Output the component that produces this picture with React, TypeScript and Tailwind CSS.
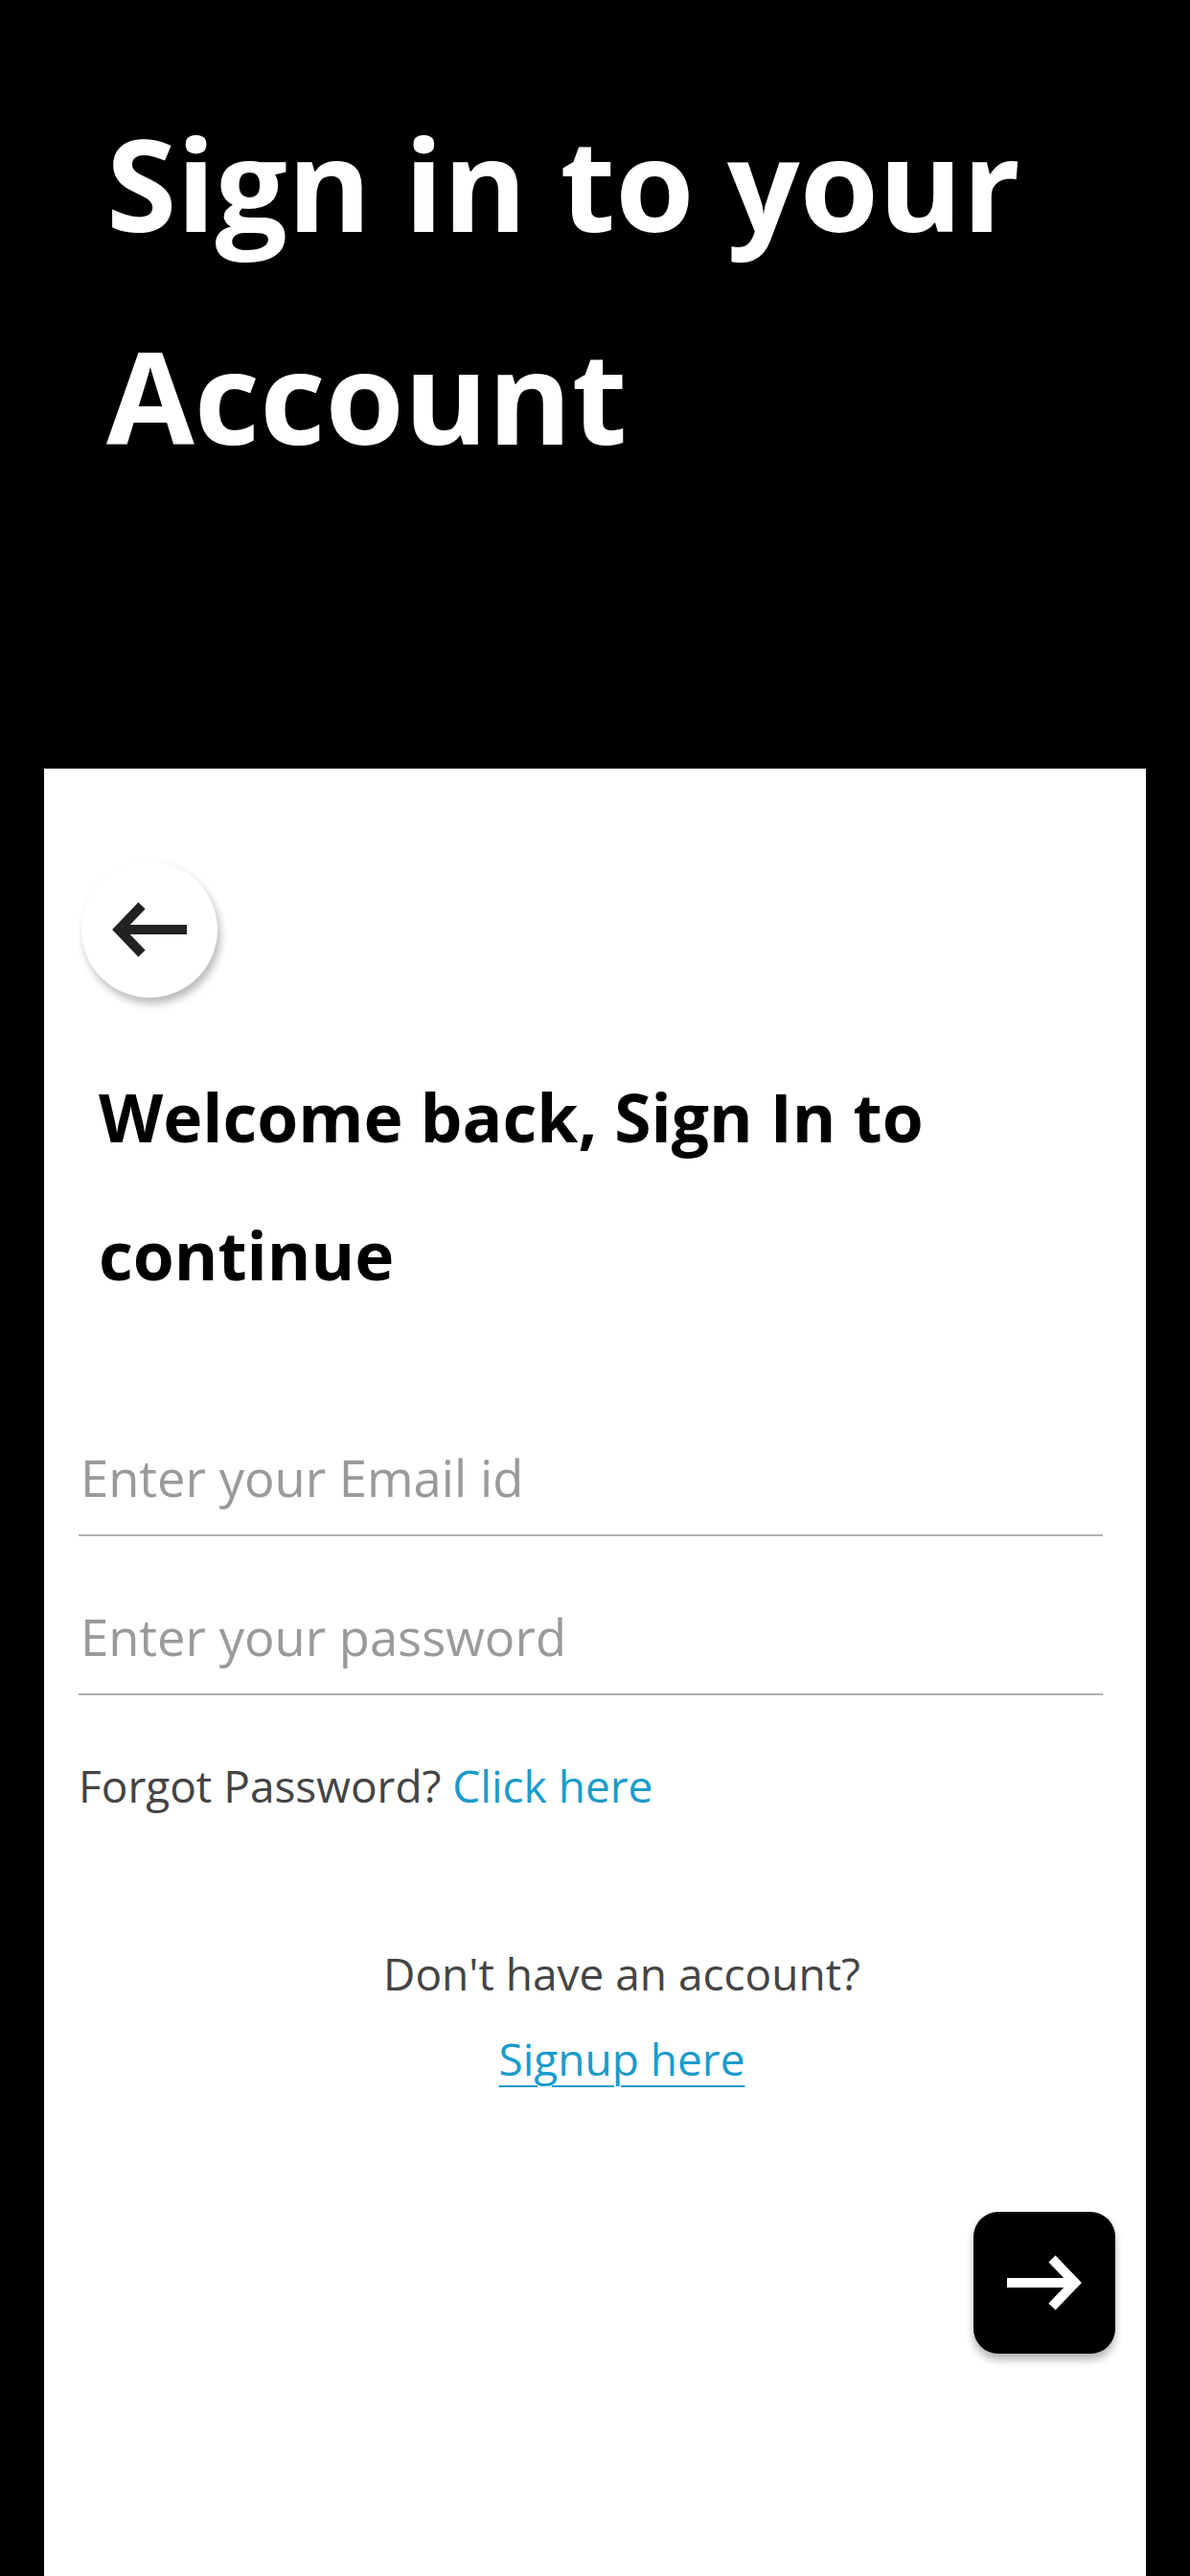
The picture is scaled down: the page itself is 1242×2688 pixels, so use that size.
import { useState } from "react";

function BackArrow() {
  return (
    <svg width="78" height="58" viewBox="0 0 78 58" fill="none">
      <path d="M10 29H78" stroke="#222" strokeWidth="10" />
      <path d="M31 4L7 29L31 54" stroke="#222" strokeWidth="10" strokeLinejoin="miter" />
    </svg>
  );
}

function NextArrow() {
  return (
    <svg width="78" height="58" viewBox="0 0 78 58" fill="none">
      <path d="M0 29H68" stroke="#fff" strokeWidth="10" />
      <path d="M47 4L71 29L47 54" stroke="#fff" strokeWidth="10" strokeLinejoin="miter" />
    </svg>
  );
}

function App() {
  const [email, setEmail] = useState("");
  const [password, setPassword] = useState("");

  return (
    <main
      className="flex min-h-[2688px] flex-col bg-black"
      style={{ fontFamily: '"Open Sans", "Liberation Sans", sans-serif' }}
    >
      <header className="h-[802px] pl-[111px] pt-[80px]">
        <h1 className="text-[133px] font-bold leading-[222px] text-white">
          Sign in to your
          <br />
          Account
        </h1>
      </header>

      <section className="mx-[46px] flex flex-1 flex-col bg-white pl-[36px] pr-[32px] pt-[97px]">
        <button
          type="button"
          className="ml-[3px] flex h-[142px] w-[142px] items-center justify-center rounded-full bg-white shadow-[3px_6px_8px_rgba(0,0,0,0.28)]"
        >
          <BackArrow />
        </button>

        <h2 className="mt-[52px] pl-[21px] pr-[60px] text-[69.5px] font-bold leading-[144px] text-black">
          Welcome back, Sign In to continue
        </h2>

        <div className="mt-[100px] mr-[13px] flex flex-col gap-[44px]">
          <input
            type="email"
            value={email}
            onChange={(e) => setEmail(e.target.value)}
            placeholder="Enter your Email id"
            className="h-[122px] w-full border-b-2 border-[#b0b0b0] px-[2px] text-[52.5px] text-[#333] outline-none placeholder:text-[#9a9a9a]"
          />
          <input
            type="password"
            value={password}
            onChange={(e) => setPassword(e.target.value)}
            placeholder="Enter your password"
            className="h-[122px] w-full border-b-2 border-[#b0b0b0] px-[2px] text-[52.5px] text-[#333] outline-none placeholder:text-[#9a9a9a]"
          />
        </div>

        <p className="mt-[64px] text-[46px] leading-[61px] text-[#444]">
          Forgot Password? <a className="text-[#1a9bcb]">Click here</a>
        </p>

        <div className="mt-[135px] flex flex-col items-center gap-[28px] pl-[52px] text-[46px] leading-[61px]">
          <p className="text-[#444]">Don't have an account?</p>
          <a className="text-[#1a9bcb] underline decoration-2 underline-offset-[10px]">Signup here</a>
        </div>

        <div className="mt-[129px] flex justify-end">
          <button
            type="button"
            className="flex h-[148px] w-[148px] items-center justify-center rounded-[26px] bg-black shadow-[0_6px_8px_rgba(0,0,0,0.3)]"
          >
            <NextArrow />
          </button>
        </div>
      </section>
    </main>
  );
}

export default App;
